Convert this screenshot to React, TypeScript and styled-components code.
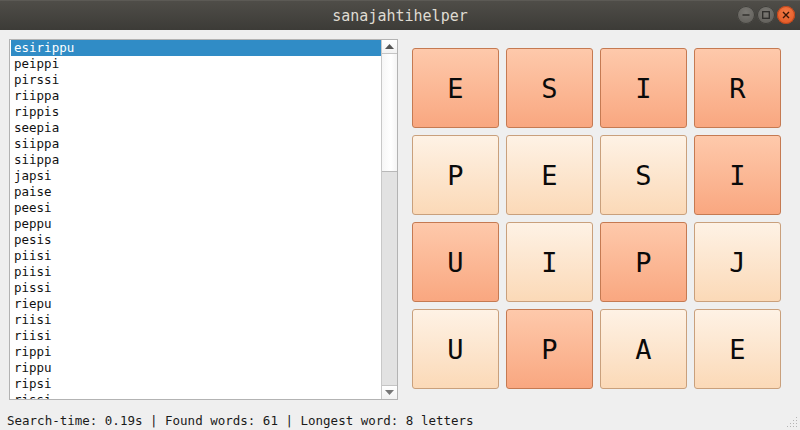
import React from "react";
import styled, { createGlobalStyle } from "styled-components";

const GlobalStyle = createGlobalStyle`
  html, body { margin: 0; padding: 0; background: #efefef; }
  #root { width: 800px; height: 430px; overflow: hidden; }
`;

const words = [
  "esirippu", "peippi", "pirssi", "riippa", "rippis", "seepia", "siippa",
  "siippa", "japsi", "paise", "peesi", "peppu", "pesis", "piisi", "piisi",
  "pissi", "riepu", "riisi", "riisi", "rippi", "rippu", "ripsi", "rissi",
];

const board = [
  ["E", "S", "I", "R"],
  ["P", "E", "S", "I"],
  ["U", "I", "P", "J"],
  ["U", "P", "A", "E"],
];

const path = ["0-0", "0-1", "0-2", "0-3", "1-3", "2-2", "3-1", "2-0"];

export default function App() {
  return (
    <Window>
      <GlobalStyle />
      <TitleBar>
        <Title>sanajahtihelper</Title>
        <Controls>
          <WinButton>
            <svg width="8" height="8" viewBox="0 0 8 8">
              <line x1="0.5" y1="4" x2="7.5" y2="4" stroke="#2e2d2a" strokeWidth="1.4" />
            </svg>
          </WinButton>
          <WinButton>
            <svg width="8" height="8" viewBox="0 0 8 8">
              <rect x="0.7" y="0.7" width="6.6" height="6.6" fill="none" stroke="#2e2d2a" strokeWidth="1.3" />
            </svg>
          </WinButton>
          <WinButton $close>
            <svg width="8" height="8" viewBox="0 0 8 8">
              <path d="M1 1 L7 7 M7 1 L1 7" stroke="#3a1608" strokeWidth="1.4" />
            </svg>
          </WinButton>
        </Controls>
      </TitleBar>
      <Content>
        <Main>
          <ListBox>
            <Rows>
              {words.map((w, i) => (
                <Row key={i} $selected={i === 0}>{w}</Row>
              ))}
            </Rows>
            <ScrollBar>
              <ArrowButton>
                <svg width="9" height="5" viewBox="0 0 9 5">
                  <path d="M0 5 L4.5 0 L9 5 Z" fill="#555" />
                </svg>
              </ArrowButton>
              <Thumb />
              <Track />
              <ArrowButton $down>
                <svg width="9" height="5" viewBox="0 0 9 5">
                  <path d="M0 0 L4.5 5 L9 0 Z" fill="#777" />
                </svg>
              </ArrowButton>
            </ScrollBar>
          </ListBox>
          <Board>
            {board.map((row, r) =>
              row.map((ch, c) => (
                <Tile key={`${r}-${c}`} $hot={path.includes(`${r}-${c}`)}>
                  {ch}
                </Tile>
              ))
            )}
          </Board>
        </Main>
        <StatusBar>
          <span>Search-time: 0.19s | Found words: 61 | Longest word: 8 letters</span>
          <Grip>
            <svg width="12" height="12" viewBox="0 0 12 12">
              {[[10, 2], [7, 5], [10, 5], [4, 8], [7, 8], [10, 8], [1, 11], [4, 11], [7, 11], [10, 11]].map(([x, y], i) => (
                <rect key={i} x={x} y={y - 1} width="1" height="1" fill="#b4b4b4" />
              ))}
            </svg>
          </Grip>
        </StatusBar>
      </Content>
    </Window>
  );
}

const Window = styled.div`
  width: 800px;
  height: 430px;
  display: flex;
  flex-direction: column;
  background: #efefef;
  font-family: "DejaVu Sans Mono", monospace;
`;

const TitleBar = styled.div`
  height: 30px;
  flex: none;
  position: relative;
  display: flex;
  align-items: center;
  justify-content: center;
  background: linear-gradient(#4f4d48, #3c3b37);
  border-top: 1px solid #5c5a55;
  box-sizing: border-box;
`;

const Title = styled.div`
  color: #dfdbd2;
  font-size: 15px;
  font-family: "DejaVu Sans Mono", monospace;
`;

const Controls = styled.div`
  position: absolute;
  right: 5px;
  top: 5px;
  display: flex;
  gap: 2px;
`;

const WinButton = styled.div<{ $close?: boolean }>`
  width: 18px;
  height: 18px;
  border-radius: 50%;
  display: flex;
  align-items: center;
  justify-content: center;
  background: ${(p) =>
    p.$close
      ? "radial-gradient(circle at 50% 35%, #f47a45, #e0521f)"
      : "radial-gradient(circle at 50% 35%, #7a7873, #5b5954)"};
  box-shadow: inset 0 0 0 1px ${(p) => (p.$close ? "#b8451c" : "#3e3d39")};
`;

const Content = styled.div`
  flex: 1;
  display: flex;
  flex-direction: column;
  padding: 9px 0 0 9px;
`;

const Main = styled.div`
  display: flex;
  height: 361px;
  gap: 15px;
`;

const ListBox = styled.div`
  width: 389px;
  box-sizing: border-box;
  border: 1px solid #b3b3b3;
  background: #fff;
  display: flex;
  overflow: hidden;
`;

const Rows = styled.div`
  flex: 1;
  overflow: hidden;
  padding-left: 1px;
`;

const Row = styled.div<{ $selected?: boolean }>`
  height: 16px;
  line-height: 16px;
  font-size: 12.5px;
  padding-left: 3px;
  color: ${(p) => (p.$selected ? "#fff" : "#111")};
  background: ${(p) => (p.$selected ? "#308cc6" : "transparent")};
`;

const ScrollBar = styled.div`
  width: 15px;
  flex: none;
  border-left: 1px solid #c8c8c8;
  display: flex;
  flex-direction: column;
  background: #e2e2e2;
`;

const ArrowButton = styled.div<{ $down?: boolean }>`
  height: 13px;
  flex: none;
  display: flex;
  align-items: center;
  justify-content: center;
  background: linear-gradient(#ffffff, #f2f2f2);
  border-bottom: ${(p) => (p.$down ? "none" : "1px solid #c4c4c4")};
  border-top: ${(p) => (p.$down ? "1px solid #c4c4c4" : "none")};
`;

const Thumb = styled.div`
  height: 117px;
  flex: none;
  background: linear-gradient(90deg, #f6f6f6, #ffffff 60%, #f4f4f4);
  border-bottom: 1px solid #b8b8b8;
`;

const Track = styled.div`
  flex: 1;
  background: #e2e2e2;
`;

const Board = styled.div`
  width: 369px;
  margin-top: 9px;
  margin-left: -1px;
  display: grid;
  grid-template-columns: repeat(4, 87px);
  grid-template-rows: repeat(4, 80px);
  gap: 7px;
  align-content: start;
`;

const Tile = styled.div<{ $hot?: boolean }>`
  box-sizing: border-box;
  border-radius: 3px;
  display: flex;
  align-items: center;
  justify-content: center;
  font-family: "DejaVu Sans Mono", monospace;
  font-size: 27px;
  color: #0a0a0a;
  border: 1px solid ${(p) => (p.$hot ? "#c57a52" : "#c9a07c")};
  background: ${(p) =>
    p.$hot
      ? "linear-gradient(#fec9ab, #f9a780)"
      : "linear-gradient(#fef2e5, #fbd9b7)"};
`;

const StatusBar = styled.div`
  flex: 1;
  display: flex;
  align-items: center;
  padding-top: 10px;
  margin-left: -2px;
  font-size: 12.5px;
  color: #1a1a1a;
  position: relative;
`;

const Grip = styled.div`
  position: absolute;
  right: 2px;
  bottom: 2px;
  display: flex;
`;
